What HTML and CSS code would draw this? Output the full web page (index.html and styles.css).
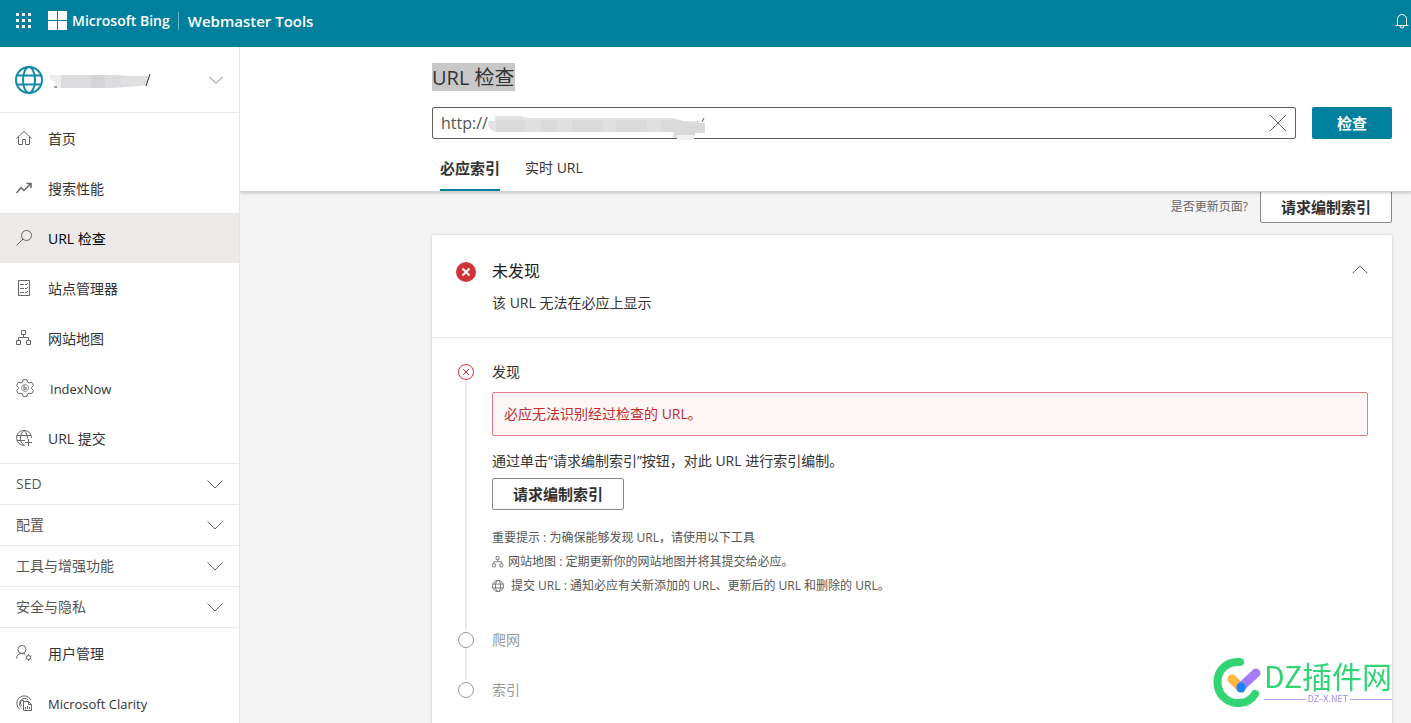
FILE: index.html
```html
<!DOCTYPE html>
<html lang="zh-CN">
<head>
<meta charset="utf-8">
<title>URL 检查 - Webmaster Tools</title>
<link rel="stylesheet" href="styles.css">
</head>
<body>
<svg class="sprite" aria-hidden="true">
  <symbol id="chevron" viewBox="0 0 16 16"><path d="M.5 4.500 8 12l7.500-7.500"/></symbol>
  <symbol id="sitemap" viewBox="0 0 16 16"><path d="M5.500.5h4v4h-4zM.5 10.500h4v4h-4zM10.500 10.500h4v4h-4zM7.500 4.500v3M2.500 10.500v-3h10v3"/></symbol>
  <symbol id="globe" viewBox="0 0 28 28"><circle cx="14" cy="14" r="13"/><ellipse cx="14" cy="14" rx="6" ry="13"/><path d="M2 9.500h24M2 18.500h24"/></symbol>
</svg>
<div class="app">
  <header class="topbar">
    <button class="icon-button" aria-label="应用">
      <svg width="16" height="16" viewBox="0 0 16 16" fill="#fff"><path d="M0 0h3v3H0zM6 0h3v3H6zM12 0h3v3h-3zM0 6h3v3H0zM6 6h3v3H6zM12 6h3v3h-3zM0 12h3v3H0zM6 12h3v3H6zM12 12h3v3h-3z"/></svg>
    </button>
    <a class="brand" href="#">
      <svg width="19" height="19" viewBox="0 0 19 19" fill="#fff"><path d="M0 0h9v9H0zM10 0h9v9h-9zM0 10h9v9H0zM10 10h9v9h-9z"/></svg>
      <span>Microsoft Bing</span>
    </a>
    <a class="product" href="#">Webmaster Tools</a>
    <button class="icon-button bell" aria-label="通知">
      <svg class="line" width="14" height="16" viewBox="0 0 14 16"><path d="M2.500 12V6a4.500 4.500 0 0 1 9 0v6M.5 12.500h13M5 13a2 2 0 0 0 4 0"/></svg>
    </button>
  </header>

  <nav class="sidebar">
    <button class="site">
      <svg class="line site-globe" width="28" height="28"><use href="#globe"/></svg>
      <svg class="site-name" width="104" height="18" viewBox="0 0 104 18"><path d="M1 4h14v13H7l-1-6-5-3z" fill="#eee"/><path d="M12 4h56l12 1h20l-2 9-20 2-16 1H12z" fill="#dcdcde"/><path d="M42 4h14v13H42z" fill="#d5d5d8"/><path d="M72 5h27l-2 9-25 1z" fill="#dfe0e1"/><path d="m97 15 4-12" stroke="#333"/><path d="M5 16h3" stroke="#444"/></svg>
      <svg class="line site-chevron" width="14" height="14"><use href="#chevron"/></svg>
    </button>
    <ul class="menu">
      <li><a class="item" href="#"><svg class="line" width="16" height="16" viewBox="0 0 16 16"><path d="M.5 8.500 8 1.500l7.500 7M2.500 7v7.500h4v-5h3v5h4V7"/></svg><span>首页</span></a></li>
      <li><a class="item" href="#"><svg class="line strong" width="16" height="16" viewBox="0 0 16 16"><path d="m.5 13 4.500-5.500 3 3L15 3.500M10.500 3.500H15V8"/></svg><span>搜索性能</span></a></li>
      <li><a class="item active" href="#" aria-current="page"><svg class="line" width="16" height="16" viewBox="0 0 16 16"><circle cx="10.500" cy="5.500" r="5"/><path d="M7 9 .5 15.500"/></svg><span>URL 检查</span></a></li>
      <li><a class="item" href="#"><svg class="line" width="16" height="16" viewBox="0 0 16 16"><path d="M2.500.5h11v15h-11zM4 4.500h4M4 8.500h4M4 12.500h4M9 4l1 1 2-2M9 8l1 1 2-2M9 12l1 1 2-2"/></svg><span>站点管理器</span></a></li>
      <li><a class="item" href="#"><svg class="line" width="16" height="16"><use href="#sitemap"/></svg><span>网站地图</span></a></li>
      <li><a class="item" href="#"><svg class="line" width="18" height="18" viewBox="0 0 18 18"><path d="M7 .7h4l.6 2.500 1.400.8 2.500-.8 2 3.500-1.900 1.800v1.200l1.900 1.700-2 3.500-2.500-.8-1.400.8-.6 2.500H7l-.6-2.500-1.400-.8-2.500.8-2-3.500 1.900-1.700V8.500L.5 6.700l2-3.500 2.500.8 1.400-.8z"/><circle cx="9" cy="9" r="3.500" stroke="#999"/><path d="M8 6v5l3-1.500-2.500-1.500"/></svg><span class="latin">IndexNow</span></a></li>
      <li><a class="item" href="#"><svg class="line" width="16" height="16" viewBox="0 0 16 16"><path d="M9 15.300A7.500 7.500 0 1 1 15.500 8M8 .5c-5 4-5 11 0 15M8 .5c2.500 2 3.500 4.500 3.500 8M1 5.500h14M1 10.500h8M12.500 9v7M9 12.500h7"/></svg><span>URL 提交</span></a></li>
    </ul>
    <button class="group"><span>SED</span><svg class="line" width="16" height="16"><use href="#chevron"/></svg></button>
    <button class="group"><span>配置</span><svg class="line" width="16" height="16"><use href="#chevron"/></svg></button>
    <button class="group"><span>工具与增强功能</span><svg class="line" width="16" height="16"><use href="#chevron"/></svg></button>
    <button class="group last"><span>安全与隐私</span><svg class="line" width="16" height="16"><use href="#chevron"/></svg></button>
    <ul class="menu">
      <li><a class="item" href="#"><svg class="line" width="16" height="16" viewBox="0 0 16 16"><circle cx="6" cy="4.500" r="4"/><path d="M.5 13.500C.5 10 3 8.500 6 8.500c1 0 2 .3 3 .8"/><circle cx="12.500" cy="12.500" r="2"/><path d="M12.500 9v1.500M12.500 14.500V16M9.500 10.800l1.300.7M14.200 13.500l1.300.7M9.500 14.200l1.300-.7M14.200 11.500l1.300-.7"/></svg><span>用户管理</span></a></li>
      <li><a class="item" href="#"><svg class="line" width="16" height="16" viewBox="0 0 16 16"><path d="M4 14.500A7.500 7.500 0 1 1 15 5M5 12.500A5 5 0 1 1 12.500 5M6 10.500A2.500 2.500 0 0 1 8 5.500M7.500 6.500h5l3 3v6h-8zM12.500 6.500v3h3M9.500 12v2M11.500 11v3M13.500 12v2"/></svg><span class="latin">Microsoft Clarity</span></a></li>
    </ul>
  </nav>

  <main class="main">
    <section class="inspect">
      <h1><span>URL 检查</span></h1>
      <form class="search">
        <div class="field">
          <input type="text" value="http://" aria-label="URL">
          <svg class="redacted" width="220" height="28" viewBox="0 0 220 28"><path d="M2 8h6V3h27l4 2h148l8 3h18v11h-7v6h-20v-6H9l-5-2-3-5z" fill="#e3e3e3"/><path d="M9 7h183l12 3h14v10h-10v3h-20v-4H9z" fill="#dadada"/><path d="M38 7h16v12H38zM70 7h15v12H70zM115 7h14v12h-14zM160 7h14v12h-14z" fill="#e0e0e0"/><path d="M190 22h17v5h-17z" fill="#f0f0f0"/><path d="m215 9 2-4" stroke="#555"/></svg>
          <button type="reset" class="clear" aria-label="清除"><svg class="line" width="16" height="16" viewBox="0 0 16 16"><path d="m0 0 16 16M16 0 0 16"/></svg></button>
        </div>
        <button type="button" class="primary">检查</button>
      </form>
      <div class="tabs" role="tablist">
        <button role="tab" aria-selected="true" class="tab selected">必应索引</button>
        <button role="tab" aria-selected="false" class="tab">实时 URL</button>
      </div>
    </section>

    <section class="results">
      <div class="update"><span>是否更新页面?</span><button class="secondary">请求编制索引</button></div>
      <article class="card">
        <header class="card-head">
          <svg width="20" height="20" viewBox="0 0 20 20"><circle cx="10" cy="10" r="10" fill="#d13438"/><path d="m6.500 6.500 7 7M13.500 6.500l-7 7" stroke="#fff" stroke-width="2"/></svg>
          <div class="summary"><h2>未发现</h2><p>该 URL 无法在必应上显示</p></div>
          <button class="collapse" aria-label="折叠"><svg class="line" width="16" height="16"><use href="#chevron"/></svg></button>
        </header>
        <ol class="steps">
          <li class="step">
            <div class="rail"><svg class="error" width="16" height="16" viewBox="0 0 16 16"><circle cx="8" cy="8" r="7.500"/><path d="m5 5 6 6M11 5l-6 6"/></svg></div>
            <div class="step-body">
              <h3>发现</h3>
              <div class="alert" role="alert">必应无法识别经过检查的 URL。</div>
              <p>通过单击“请求编制索引”按钮，对此 URL 进行索引编制。</p>
              <button class="secondary">请求编制索引</button>
              <div class="hints">
                <p>重要提示 : 为确保能够发现 URL，请使用以下工具</p>
                <p><svg class="line" width="12" height="12"><use href="#sitemap"/></svg><span><a href="#">网站地图</a> : 定期更新你的网站地图并将其提交给必应。</span></p>
                <p class="submit"><svg class="line small-globe" width="12" height="12"><use href="#globe"/></svg><span><a href="#">提交 URL</a> : 通知必应有关新添加的 URL、更新后的 URL 和删除的 URL。</span></p>
              </div>
            </div>
          </li>
          <li class="step pending"><div class="rail"><i class="dot"></i></div><h3>爬网</h3></li>
          <li class="step pending"><div class="rail"><i class="dot"></i></div><h3>索引</h3></li>
        </ol>
      </article>
    </section>
  </main>
</div>
<div class="watermark">
  <svg width="50" height="52" viewBox="0 0 50 52" fill="none" stroke-linecap="round"><path d="M27 5C14 4 4 13 4.500 26S16 47 27 46c7-.5 12-4 15-9" stroke="#32d474" stroke-width="8"/><path d="m19 22 9 9" stroke="#ffb73c" stroke-width="9"/><path d="M28 30 43 16" stroke="#a47cff" stroke-width="9"/><path d="M28 30v1" stroke="#1684ff" stroke-width="9"/></svg>
  <div class="mark-text"><strong>DZ插件网</strong><small>DZ–X.NET</small></div>
</div>
</body>
</html>
```
FILE: styles.css
```css
* { box-sizing: border-box; }
body, h1, h2, h3, p, ul, ol { margin: 0; padding: 0; font-weight: 400; }
body {
  font-family: "Open Sans", "Noto Sans CJK SC", sans-serif;
  font-size: 14px;
  line-height: 20px;
  color: #333;
}
ul, ol { list-style: none; }
button, input { font: inherit; color: inherit; }
button { border: 0; background: none; padding: 0; cursor: pointer; }
a { color: inherit; text-decoration: none; }
svg { flex: none; display: block; }
.sprite { position: absolute; width: 0; height: 0; }
.line { fill: none; stroke: #666; stroke-width: 1; }

.app {
  display: grid;
  grid-template: 47px minmax(0, 1fr) / 240px minmax(0, 1fr);
  height: 100vh;
  overflow: hidden;
}

.topbar {
  grid-column: 1 / -1;
  display: flex;
  align-items: center;
  padding: 0 0 6px 16px;
  background: #00809d;
  color: #fff;
  font-weight: 600;
  overflow: hidden;
}
.brand { display: flex; align-items: center; gap: 5px; margin-left: 16px; font-size: 14px; }
.product { margin-left: 8px; padding-left: 9px; border-left: 1px solid #66b3c4; font-size: 15px; line-height: 18px; }
.bell { margin: 0 2px 0 auto; }
.bell svg { stroke: #fff; }

.sidebar { border-right: 1px solid #e5e5e5; background: #fff; overflow: hidden; }
.site {
  display: flex;
  align-items: center;
  width: 100%;
  height: 66px;
  padding: 0 16px 0 15px;
  border-bottom: 1px solid #e8e8e8;
}
.site-globe { stroke: #1488a8; stroke-width: 2; }
.site-name { margin-left: 6px; }
.site-chevron { margin-left: auto; }
.item { display: flex; align-items: center; gap: 16px; height: 50px; padding: 0 16px; }
.item span { padding-top: 2px; }
.item .latin { font-size: 13px; }
.item .strong { stroke-width: 1.500; }
.item.active { background: #ebeae9; color: #000; }
.group {
  display: flex;
  align-items: center;
  justify-content: space-between;
  width: 100%;
  height: 41px;
  padding: 0 16px;
  border-top: 1px solid #e8e8e8;
  color: #555;
}
.group.last { height: 42px; border-bottom: 1px solid #e8e8e8; }
.item + .item { margin-top: 0; }

.main { display: flex; flex-direction: column; background: #f4f4f4; overflow: hidden; }
.inspect {
  position: relative;
  z-index: 1;
  padding: 16px 19px 0 192px;
  background: #fff;
  border-bottom: 1px solid #d2d2d2;
  box-shadow: 0 1px 3px #0003;
}
h1 { display: flex; font-size: 20px; line-height: 26px; }
h1 span { padding-top: 2px; background: #c8c8c8; }
.search { display: flex; gap: 16px; margin-top: 16px; }
.field { position: relative; flex: 1; }
.field input {
  display: block;
  width: 100%;
  height: 32px;
  padding: 0 40px 0 8px;
  border: 1px solid #605e5c;
  border-radius: 2px;
  outline: 0;
  font-size: 16px;
  color: #555;
}
.redacted { position: absolute; left: 55px; top: 6px; }
.clear { position: absolute; right: 10px; top: 8px; }
.primary, .secondary { font-size: 15px; }
.primary { width: 80px; height: 32px; border-radius: 2px; background: #00809d; color: #fff; font-weight: 700; }
.tabs { display: flex; gap: 25px; margin-top: 8px; padding-left: 8px; }
.tab { height: 44px; border-bottom: 2px solid transparent; }
.tab.selected { border-color: #00809d; font-size: 15px; font-weight: 700; }

.results { padding: 0 19px 0 192px; }
.update {
  display: flex;
  justify-content: flex-end;
  align-items: center;
  gap: 12px;
  margin-top: -1px;
  font-size: 12px;
  color: #666;
}
.secondary {
  height: 32px;
  padding: 0 20px;
  border: 1px solid #8a8886;
  border-radius: 2px;
  background: #fff;
  color: #323130;
  font-weight: 700;
}
.card { margin-top: 12px; border-radius: 2px; background: #fff; box-shadow: 0 0 3px #0003; }
.card-head { display: flex; gap: 16px; padding: 24px; border-bottom: 1px solid #e8e8e8; }
.card-head > svg { margin-top: 3px; }
.summary { flex: 1; }
h2 { margin-bottom: 10px; font-size: 16px; line-height: 24px; color: #222; }
.collapse { align-self: flex-start; transform: rotate(180deg); margin-top: 3px; }
.steps { padding: 24px 24px 40px; }
.step { display: flex; gap: 16px; min-height: 50px; }
h3 { font-size: 14px; line-height: 20px; }
.rail { display: flex; flex-direction: column; align-items: center; width: 20px; padding-top: 2px; }
.step:not(:last-child) .rail::after { content: ""; flex: 1; width: 2px; background: #eaeaea; }
.error { fill: none; stroke: #d13438; }
.dot { width: 16px; height: 16px; border: 1px solid #999; border-radius: 50%; }
.pending { color: #999; }
.step-body { flex: 1; padding-bottom: 32px; }
.alert {
  margin: 10px 0 15px;
  padding: 11px;
  border: 1px solid #e37d80;
  border-radius: 2px;
  background: #fdf6f6;
  color: #c02b30;
}
.step-body > .secondary { margin-top: 7px; }
.hints { margin-top: 16px; font-size: 12px; line-height: 24px; color: #555; }
.hints p { display: flex; align-items: center; gap: 4px; }
.hints .submit { gap: 7px; }
.hints .small-globe { stroke-width: 2; }

.watermark { position: fixed; right: 19px; bottom: 14px; z-index: 2; display: flex; align-items: center; gap: 1px; }
.mark-text { font-family: "Noto Sans CJK SC", sans-serif; }
.mark-text strong { display: block; font-size: 30px; line-height: 34px; font-weight: 400; color: #32d474; }
.mark-text small { display: flex; align-items: center; gap: 2px; margin-bottom: 2px; font-size: 9px; line-height: 14px; color: #a68af5; }
.mark-text small::before, .mark-text small::after { content: ""; flex: 1; height: 1px; background: #b79cf7; }
```
